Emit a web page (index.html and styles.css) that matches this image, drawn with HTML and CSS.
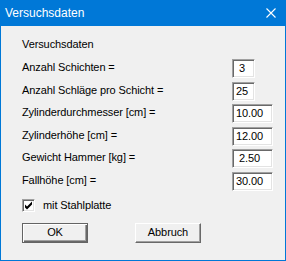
FILE: index.html
```html
<!DOCTYPE html>
<html lang="de">
<head>
    <meta charset="UTF-8">
    <title>Versuchsdaten</title>
    <link rel="stylesheet" href="styles.css">
</head>
<body>
    <div class="window">
        <div class="titlebar">
            <span class="title">Versuchsdaten</span>
            <svg class="close" width="10" height="10" viewBox="0 0 10 10">
                <path d="M0.5 0.5 L9.5 9.5 M9.5 0.5 L0.5 9.5" stroke="#fff" stroke-width="1.1" fill="none"/>
            </svg>
        </div>

        <div class="content">
            <div class="heading">Versuchsdaten</div>

            <div class="fields">
                <div class="field-label">Anzahl Schichten =</div>
                <div class="field-value narrow indent">3</div>

                <div class="field-label">Anzahl Schläge pro Schicht =</div>
                <div class="field-value narrow">25</div>

                <div class="field-label">Zylinderdurchmesser [cm] =</div>
                <div class="field-value">10.00</div>

                <div class="field-label">Zylinderhöhe [cm] =</div>
                <div class="field-value">12.00</div>

                <div class="field-label">Gewicht Hammer [kg] =</div>
                <div class="field-value indent">2.50</div>

                <div class="field-label">Fallhöhe [cm] =</div>
                <div class="field-value">30.00</div>
            </div>

            <div class="check-row">
                <span class="checkbox">
                    <svg width="9" height="9" viewBox="0 0 9 9">
                        <path d="M1 3.5 L3 5.5 L8 0.5 L8 3.5 L3 8.5 L1 6.5 Z" fill="#000"/>
                    </svg>
                </span>
                <span class="check-label">mit Stahlplatte</span>
            </div>

            <div class="buttons">
                <div class="button default">OK</div>
                <div class="button">Abbruch</div>
            </div>
        </div>
    </div>
</body>
</html>
```

FILE: styles.css
```css
* {
    margin: 0;
    padding: 0;
    box-sizing: border-box;
}

body {
    font-family: 'Liberation Sans', Arial, sans-serif;
    font-size: 11px;
    letter-spacing: -0.1px;
    color: #000;
    background: #f0f0f0;
}

.window {
    width: 286px;
    height: 261px;
    border: 1px solid #0078d7;
    border-top: none;
    background: #f0f0f0;
}

.titlebar {
    height: 26px;
    background: #0078d7;
    display: flex;
    align-items: center;
    justify-content: space-between;
    padding: 0 9px 0 4px;
}

.title {
    color: #fff;
    font-size: 12px;
    letter-spacing: 0;
}

.close {
    display: block;
}

.content {
    padding: 12px 0 0 21px;
}

.heading {
    line-height: 13px;
    margin-bottom: 8px;
}

.fields {
    display: grid;
    grid-template-columns: 210px auto;
    grid-auto-rows: 19px;
    row-gap: 3.6px;
}

.field-label {
    line-height: 17px;
}

.field-value {
    width: 41px;
    height: 19px;
    background: #fff;
    border: 1px solid;
    border-color: #a0a0a0 #fff #fff #a0a0a0;
    box-shadow: inset 1px 1px 0 #696969, inset -1px -1px 0 #e3e3e3;
    padding: 0 0 0 3px;
    line-height: 17px;
}

.field-value.narrow {
    width: 23px;
}

.field-value.indent {
    padding-left: 6px;
}

.check-row {
    display: flex;
    align-items: center;
    margin-top: 8px;
    height: 13px;
}

.checkbox {
    width: 13px;
    height: 13px;
    background: #fff;
    border: 1px solid;
    border-color: #a0a0a0 #fff #fff #a0a0a0;
    box-shadow: inset 1px 1px 0 #696969, inset -1px -1px 0 #e3e3e3;
    display: flex;
    align-items: center;
    justify-content: center;
}

.checkbox svg {
    display: block;
}

.check-label {
    margin-left: 8px;
}

.buttons {
    display: flex;
    gap: 47px;
    margin-top: 11px;
}

.button {
    width: 66px;
    height: 20px;
    background: #f0f0f0;
    border: 1px solid;
    border-color: #fff #696969 #696969 #fff;
    box-shadow: inset -1px -1px 0 #a0a0a0;
    text-align: center;
    line-height: 17px;
}

.button.default {
    border-color: #646464;
    box-shadow: inset 1px 1px 0 #fff, inset -1px -1px 0 #696969, inset -2px -2px 0 #a0a0a0;
}
```
